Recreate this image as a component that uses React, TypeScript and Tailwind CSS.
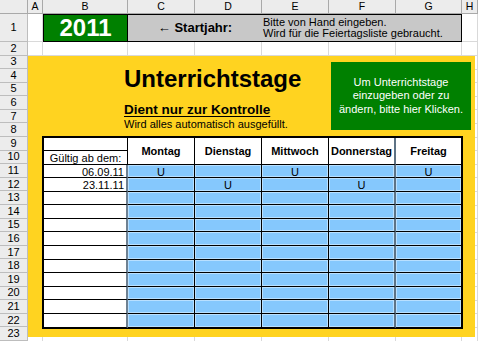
const sheetCols = [
  { id: "A", w: "w-[15px]" },
  { id: "B", w: "w-[85px]" },
  { id: "C", w: "w-[67px]" },
  { id: "D", w: "w-[67px]" },
  { id: "E", w: "w-[67px]" },
  { id: "F", w: "w-[67px]" },
  { id: "G", w: "w-[66px]" },
  { id: "H", w: "w-[16px]" },
];

const days = ["Montag", "Dienstag", "Mittwoch", "Donnerstag", "Freitag"];

const entries: { date: string; on: boolean[] }[] = [
  { date: "06.09.11", on: [true, false, true, false, true] },
  { date: "23.11.11", on: [false, true, false, true, false] },
  ...Array.from({ length: 10 }, () => ({ date: "", on: [false, false, false, false, false] })),
];

function RowHead({ n, h }: { n: number; h: string }) {
  return (
    <div
      className={`${h} w-[28px] shrink-0 flex items-center justify-center border-b border-r border-[#bdbdbd] bg-[#ececec] text-[11px] leading-none text-black`}
    >
      {n}
    </div>
  );
}

function UnterrichtsTabelle() {
  return (
    <div className="ml-[15px] w-fit grid grid-cols-[84px_67px_67px_67px_67px_66px] grid-rows-[13px_13.5px_repeat(12,13.6px)] border-l border-t border-black ring-1 ring-black bg-white text-[11px]">
      <div className="border-r border-b border-black" />
      {days.map((d, i) => (
        <div
          key={d}
          className={`row-span-2 flex items-center justify-center font-bold border-b border-black ${
            i === 3 ? "border-r-2 border-r-[#5e7385]" : "border-r"
          }`}
        >
          {d}
        </div>
      ))}
      <div className="border-r border-b border-black text-center pt-px leading-[12px]">
        Gültig ab dem:
      </div>
      {entries.map((row, r) => (
        <div key={r} className="contents">
          <div className="border-r-2 border-r-[#6e8192] border-b border-black text-right pr-[2px] pt-px leading-[13px]">
            {row.date}
          </div>
          {row.on.map((u, i) => (
            <div
              key={i}
              className={`bg-[#85c8fd] shadow-[inset_0_0_0_1px_#b9e0ff] border-b border-black text-center pt-px leading-[13px] ${
                i === 3 ? "border-r-2 border-r-[#5e7385]" : "border-r"
              }`}
            >
              {u ? "U" : ""}
            </div>
          ))}
        </div>
      ))}
    </div>
  );
}

export default function App() {
  return (
    <div className="w-[478px] h-[341px] overflow-hidden bg-white text-black font-['Liberation_Sans',Arial,sans-serif] flex flex-col">
      {/* Spaltenköpfe */}
      <div className="flex h-[14px] shrink-0">
        <div className="w-[28px] border-r border-b border-[#a9a9a9] bg-[#ececec]" />
        {sheetCols.map((c) => (
          <div
            key={c.id}
            className={`${c.w} flex items-center justify-center border-r border-b border-[#a9a9a9] bg-[#ececec] text-[10.5px] leading-none`}
          >
            {c.id}
          </div>
        ))}
      </div>

      {/* Zeile 1 */}
      <div className="flex h-[28px] shrink-0">
        <RowHead n={1} h="h-[28px]" />
        <div className="w-[15px] border-r border-b border-[#d9d9d9]" />
        <div className="w-[85px] bg-[#008000] border border-black flex items-center justify-center text-white font-bold text-[24px] leading-none">
          2011
        </div>
        <div className="w-[334px] bg-[#c8c8c8] border-y border-r border-black flex">
          <div className="w-[134px] flex items-center justify-center font-bold text-[13px]">
            ← Startjahr:
          </div>
          <div className="flex-1 flex flex-col justify-center pl-px text-[11px] leading-[11px]">
            <span>Bitte von Hand eingeben.</span>
            <span>Wird für die Feiertagsliste gebraucht.</span>
          </div>
        </div>
        <div className="w-[16px] border-r border-b border-[#d9d9d9]" />
      </div>

      {/* Zeile 2 */}
      <div className="flex h-[13.5px] shrink-0">
        <RowHead n={2} h="h-[13.5px]" />
        {sheetCols.map((c) => (
          <div key={c.id} className={`${c.w} border-r border-b border-[#d9d9d9]`} />
        ))}
      </div>

      {/* Zeilen 3 bis 23 */}
      <div className="flex flex-1">
        <div className="flex flex-col">
          {Array.from({ length: 21 }, (_, i) => (
            <RowHead key={i} n={i + 3} h="h-[13.6px]" />
          ))}
        </div>
        <div className="relative flex-1 bg-[repeating-linear-gradient(to_bottom,transparent_0,transparent_12.6px,#d9d9d9_12.6px,#d9d9d9_13.6px)]">
          <div className="flex h-full">
            {sheetCols.map((c) => (
              <div key={c.id} className={`${c.w} h-full border-r border-[#d9d9d9]`} />
            ))}
          </div>

          <div className="absolute left-0 top-0 w-[447px] h-[281.5px] bg-[#ffd320] flex flex-col">
            <div className="flex h-[81.5px] shrink-0">
              <div className="flex-1 pl-[96px] pt-[9px]">
                <h1 className="text-[24px] leading-[28px] font-bold">Unterrichtstage</h1>
                <p className="mt-[9px] text-[13.5px] leading-[16px] font-bold underline underline-offset-2">
                  Dient nur zur Kontrolle
                </p>
                <p className="text-[11px] leading-[13px]">Wird alles automatisch ausgefüllt.</p>
              </div>
              <div className="mt-[6.5px] mr-[4px] w-[140px] h-[68px] bg-[#008000] text-white text-[11px] leading-[13.5px] flex flex-col items-center justify-center text-center">
                <span>Um Unterrichtstage</span>
                <span>einzugeben oder zu</span>
                <span>ändern, bitte hier Klicken.</span>
              </div>
            </div>
            <UnterrichtsTabelle />
          </div>
        </div>
      </div>
    </div>
  );
}
